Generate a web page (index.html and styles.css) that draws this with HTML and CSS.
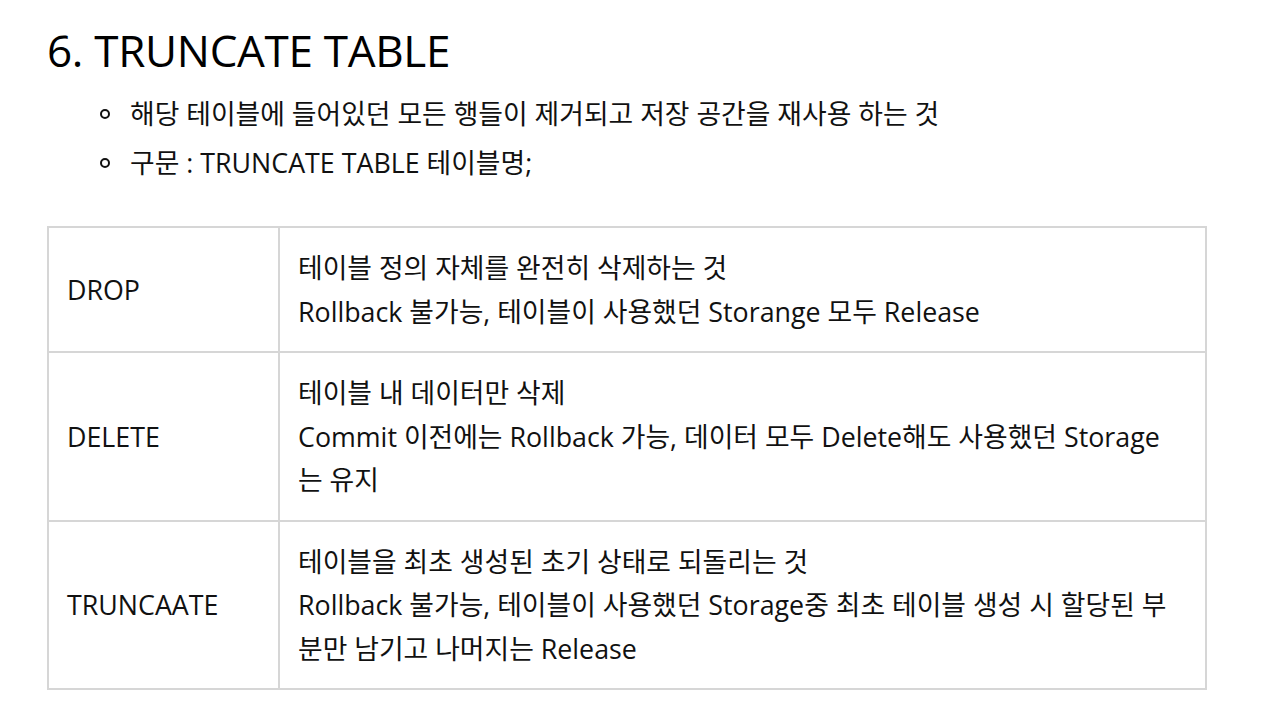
FILE: index.html
```html
<!DOCTYPE html>
<html lang="ko">
<head>
<meta charset="utf-8">
<link rel="stylesheet" href="styles.css">
</head>
<body>
<main class="page">
  <h1 class="title">6. TRUNCATE TABLE</h1>
  <ul class="bullets">
    <li>해당 테이블에 들어있던 모든 행들이 제거되고 저장 공간을 재사용 하는 것</li>
    <li>구문 : TRUNCATE TABLE 테이블명;</li>
  </ul>
  <table class="cmp">
    <tr>
      <td class="key">DROP</td>
      <td class="desc">테이블 정의 자체를 완전히 삭제하는 것<br>Rollback 불가능, 테이블이 사용했던 Storange 모두 Release</td>
    </tr>
    <tr>
      <td class="key">DELETE</td>
      <td class="desc">테이블 내 데이터만 삭제<br>Commit 이전에는 Rollback 가능, 데이터 모두 Delete해도 사용했던 Storage 는 유지</td>
    </tr>
    <tr>
      <td class="key">TRUNCAATE</td>
      <td class="desc">테이블을 최초 생성된 초기 상태로 되돌리는 것<br>Rollback 불가능, 테이블이 사용했던 Storage중 최초 테이블 생성 시 할당된 부분만 남기고 나머지는 Release</td>
    </tr>
  </table>
</main>
</body>
</html>
```
FILE: styles.css
```css
html, body {
  margin: 0;
  padding: 0;
  background: #ffffff;
}
body {
  font-family: "Open Sans", "Noto Sans CJK KR", sans-serif;
  color: #111111;
}
.page {
  padding: 22px 0 0 47px;
}
.title {
  margin: 0;
  font-size: 44px;
  font-weight: 400;
  line-height: 56px;
  color: #000;
  letter-spacing: -0.3px;
}
.bullets {
  list-style: none;
  margin: 11px 0 0 0;
  padding: 0 0 0 83px;
}
.bullets li {
  position: relative;
  font-size: 26.8px;
  line-height: 49px;
}
.bullets li::before {
  content: "";
  position: absolute;
  left: -30px;
  top: 20px;
  width: 6px;
  height: 6px;
  border: 2px solid #111;
  border-radius: 50%;
}
.cmp {
  margin-top: 39px;
  width: 1160px;
  border-collapse: collapse;
  font-size: 26.8px;
  line-height: 43.5px;
}
.cmp td {
  border: 2px solid #d6d6d6;
  padding: 18px 18px;
  vertical-align: middle;
}
.cmp .key {
  width: 193px;
}
.cmp .desc {
  word-break: normal;
}
```
